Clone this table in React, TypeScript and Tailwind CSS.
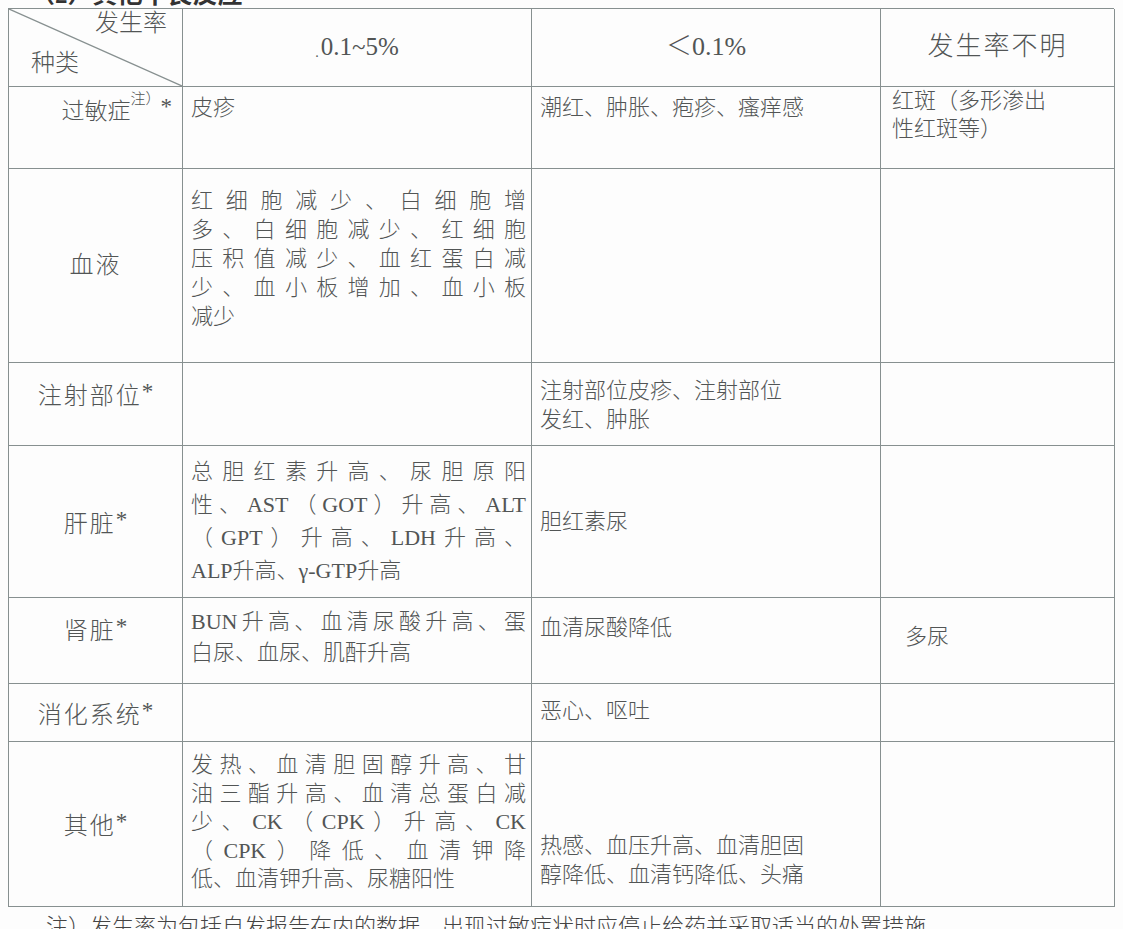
import React from "react";

const font = { fontFamily: '"Liberation Serif", "Noto Sans CJK SC", serif' };

function Lines({ lines, justify = true }: { lines: string[]; justify?: boolean }) {
  return (
    <div>
      {lines.map((l, i) => (
        <div key={i} className={justify && i < lines.length - 1 ? "text-justify [text-align-last:justify]" : ""}>
          {l}
        </div>
      ))}
    </div>
  );
}

function Star() {
  return <span className="align-[5px] text-[23px] tracking-normal">*</span>;
}

const cell = "border-r-[1.5px] border-b-[1.5px] border-[#879090]";
const label = "text-[24px] tracking-[2px]";

export default function App() {
  return (
    <div className="w-[1123px] h-[929px] overflow-hidden bg-[#fdfdfd] text-[#525555] font-light" style={font}>
      <div className="h-[8px] overflow-hidden pl-[30px]">
        <div className="mt-[-19px] text-[25px] leading-[28px] font-bold text-[#333]">（2）其他不良反应</div>
      </div>

      <div className="ml-[8px] w-[1106px] grid grid-cols-[174px_349px_349px_234px] grid-rows-[78px_82px_194px_83px_152px_86px_58px_165px] border-t-[1.5px] border-l-[1.5px] border-[#879090] text-[22px] leading-[29px]">
        {/* header */}
        <div className={`${cell} relative`}>
          <svg className="absolute inset-0 w-full h-full" viewBox="0 0 172 77" preserveAspectRatio="none">
            <line x1="0" y1="0" x2="172" y2="77" stroke="#879090" strokeWidth="1.3" />
          </svg>
          <div className="absolute right-[15px] top-[0px] text-[24px]">发生率</div>
          <div className="absolute left-[22px] top-[40px] text-[24px]">种类</div>
        </div>
        <div className={`${cell} flex items-center justify-center pb-[2px] text-[25px]`}>
          <span className="text-[14px] mr-[2px] mt-[12px]">.</span>0.1~5%
        </div>
        <div className={`${cell} flex items-center justify-center pb-[2px] text-[26px]`}>＜0.1%</div>
        <div className={`${cell} flex items-center justify-center pb-[2px] text-[26px] tracking-[2px]`}>发生率不明</div>

        {/* 过敏症 */}
        <div className={`${cell} text-right pr-[10px] pt-[5px] text-[23px]`}>
          过敏症<sup className="text-[15px] align-[8px]">注）</sup><Star />
        </div>
        <div className={`${cell} pl-[8px] pt-[6px]`}>皮疹</div>
        <div className={`${cell} pl-[8px] pt-[6px]`}>潮红、肿胀、疱疹、瘙痒感</div>
        <div className={`${cell} pl-[11px] pt-[0px] leading-[28px]`}>
          <Lines lines={["红斑（多形渗出", "性红斑等）"]} justify={false} />
        </div>

        {/* 血液 */}
        <div className={`${cell} ${label} flex items-center justify-center`}>血液</div>
        <div className={`${cell} pl-[8px] pr-[5px] pt-[17px]`}>
          <Lines lines={["红细胞减少、白细胞增", "多、白细胞减少、红细胞", "压积值减少、血红蛋白减", "少、血小板增加、血小板", "减少"]} />
        </div>
        <div className={cell}></div>
        <div className={cell}></div>

        {/* 注射部位 */}
        <div className={`${cell} ${label} text-center pt-[14px]`}>注射部位<Star /></div>
        <div className={cell}></div>
        <div className={`${cell} pl-[8px] pt-[13px]`}>
          <Lines lines={["注射部位皮疹、注射部位", "发红、肿胀"]} justify={false} />
        </div>
        <div className={cell}></div>

        {/* 肝脏 */}
        <div className={`${cell} ${label} flex items-center justify-center`}><span>肝脏<Star /></span></div>
        <div className={`${cell} pl-[8px] pr-[5px] pt-[9px] leading-[33px]`}>
          <Lines lines={["总胆红素升高、尿胆原阳", "性、AST（GOT）升高、ALT", "（GPT）升高、LDH升高、", "ALP升高、γ-GTP升高"]} />
        </div>
        <div className={`${cell} pl-[8px] flex items-center`}>胆红素尿</div>
        <div className={cell}></div>

        {/* 肾脏 */}
        <div className={`${cell} ${label} text-center pt-[14px]`}>肾脏<Star /></div>
        <div className={`${cell} pl-[8px] pr-[5px] pt-[8px] leading-[31px]`}>
          <Lines lines={["BUN升高、血清尿酸升高、蛋", "白尿、血尿、肌酐升高"]} />
        </div>
        <div className={`${cell} pl-[8px] pt-[15px]`}>血清尿酸降低</div>
        <div className={`${cell} pl-[24px] pt-[24px]`}>多尿</div>

        {/* 消化系统 */}
        <div className={`${cell} ${label} text-center pt-[12px]`}>消化系统<Star /></div>
        <div className={cell}></div>
        <div className={`${cell} pl-[8px] pt-[12px]`}>恶心、呕吐</div>
        <div className={cell}></div>

        {/* 其他 */}
        <div className={`${cell} ${label} flex items-center justify-center`}><span>其他<Star /></span></div>
        <div className={`${cell} pl-[8px] pr-[5px] pt-[9px] leading-[28.5px]`}>
          <Lines lines={["发热、血清胆固醇升高、甘", "油三酯升高、血清总蛋白减", "少、CK（CPK）升高、CK", "（CPK）降低、血清钾降", "低、血清钾升高、尿糖阳性"]} />
        </div>
        <div className={`${cell} pl-[8px] pt-[89px]`}>
          <Lines lines={["热感、血压升高、血清胆固", "醇降低、血清钙降低、头痛"]} justify={false} />
        </div>
        <div className={cell}></div>
      </div>

      <div className="pl-[46px] pt-[5px] text-[22px] leading-[29px] text-[#444]">
        注）发生率为包括自发报告在内的数据，出现过敏症状时应停止给药并采取适当的处置措施。
      </div>
    </div>
  );
}
